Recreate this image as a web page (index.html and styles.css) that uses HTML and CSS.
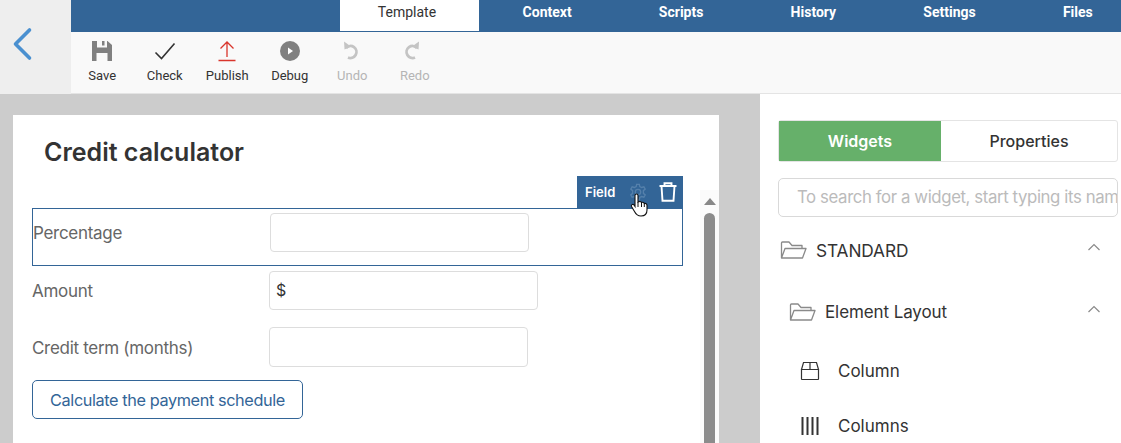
FILE: index.html
```html
<!DOCTYPE html>
<html lang="en">
<head>
<meta charset="utf-8">
<title>Credit calculator</title>
<link rel="stylesheet" href="styles.css">
</head>
<body>
<header class="header">
  <div class="back">
    <svg width="22" height="34" viewBox="0 0 22 34"><path d="M18.500 3 L4.500 17 L18.500 31" fill="none" stroke="#4a90d0" stroke-width="3.600" stroke-linecap="round" stroke-linejoin="round"/></svg>
  </div>
  <div class="header-main">
    <nav class="tabs">
      <span class="tab tab-active">Template</span>
      <span class="tab">Context</span>
      <span class="tab">Scripts</span>
      <span class="tab">History</span>
      <span class="tab">Settings</span>
      <span class="tab">Files</span>
    </nav>
    <div class="toolbar">
      <div class="tool">
        <svg class="tool-icon" width="22" height="22" viewBox="0 0 22 22"><path fill="#808080" fill-rule="evenodd" d="M1 1 H16.500 L21 5 V21 H1 Z M6 1 V7.500 H16 V1 H13.500 V5.500 H11 V1 Z M5.500 13 V21 H16.500 V13 Z"/></svg>
        <span>Save</span>
      </div>
      <div class="tool">
        <svg class="tool-icon" width="22" height="22" viewBox="0 0 22 22"><path d="M1.500 12.500 L7.500 18.500 L20.500 3.500" fill="none" stroke="#333" stroke-width="1.600"/></svg>
        <span>Check</span>
      </div>
      <div class="tool">
        <svg class="tool-icon" width="22" height="22" viewBox="0 0 22 22"><path d="M11 2 V17 M4.500 8.500 L11 2 L17.500 8.500 M2.500 20.500 H19.500" fill="none" stroke="#d9352c" stroke-width="1.300"/></svg>
        <span>Publish</span>
      </div>
      <div class="tool">
        <svg class="tool-icon" width="22" height="22" viewBox="0 0 22 22"><circle cx="11" cy="11" r="10" fill="#808080"/><path d="M9 7.500 L14 11 L9 14.500 Z" fill="#fff"/></svg>
        <span>Debug</span>
      </div>
      <div class="tool tool-off">
        <svg class="tool-icon" width="22" height="22" viewBox="0 0 22 22"><path d="M5 8 A6 6 0 1 1 7 17.500" fill="none" stroke="#c4c4c4" stroke-width="2.800"/><path d="M3 1.500 L3.500 9.500 L10 6.500 Z" fill="#c4c4c4"/></svg>
        <span>Undo</span>
      </div>
      <div class="tool tool-off">
        <svg class="tool-icon" width="22" height="22" viewBox="0 0 22 22"><path d="M13 8 A6 6 0 1 0 11 17.500" fill="none" stroke="#c4c4c4" stroke-width="2.800"/><path d="M15 1.500 L14.500 9.500 L8 6.500 Z" fill="#c4c4c4"/></svg>
        <span>Redo</span>
      </div>
    </div>
  </div>
</header>
<main class="workspace">
  <section class="canvas">
    <div class="page">
      <h1 class="title">Credit calculator</h1>
      <div class="form">
        <div class="field-selected">
          <div class="field-bar">
            <span class="field-bar-label">Field</span>
            <svg class="gear" width="18" height="18" viewBox="0 0 20 20"><path d="M8.500 1.500 H11.500 L12 4 L14 5 L16.500 4.200 L18 6.800 L16 8.500 V11.500 L18 13.200 L16.500 15.800 L14 15 L12 16 L11.500 18.500 H8.500 L8 16 L6 15 L3.500 15.800 L2 13.200 L4 11.500 V8.500 L2 6.800 L3.500 4.200 L6 5 L8 4 Z" fill="none" stroke="#5580ab" stroke-width="1.500"/><circle cx="10" cy="10" r="3" fill="none" stroke="#5580ab" stroke-width="1.500"/></svg>
            <svg class="trash" width="18" height="20" viewBox="0 0 18 20"><path d="M0.500 4 H17.500 M5.500 4 V1.200 H12.500 V4 M2.500 4 L3.500 18.800 H14.500 L15.500 4" fill="none" stroke="#fff" stroke-width="1.900"/></svg>
            <svg class="hand" width="18" height="24" viewBox="0 0 18 24"><path d="M5 2.500 C5 0.500 8 0.500 8 2.500 V9 C10 8 11 8.500 11.500 9.500 C13 9 14 9.500 14.300 10.500 C16 10 17 11 17 12.500 V17 C17 20.500 15 23 11 23 C7.500 23 6 21.500 4.500 18.500 L1.500 13.500 C0.800 12 2.800 10.500 4 12 L5 13.500 Z" fill="#fff" stroke="#111" stroke-width="1.100"/><path d="M8 9 V14 M11.500 9.500 V14 M14.300 10.500 V14" fill="none" stroke="#111" stroke-width="1"/></svg>
          </div>
          <span class="label label-selected">Percentage</span>
          <span class="input input-selected"></span>
        </div>
        <div class="row row-amount">
          <span class="label">Amount</span>
          <span class="input input-wide">$</span>
        </div>
        <div class="row row-term">
          <span class="label">Credit term (months)</span>
          <span class="input"></span>
        </div>
        <button class="calc" type="button">Calculate the payment schedule</button>
      </div>
      <div class="scroll">
        <span class="scroll-arrow"></span>
        <span class="scroll-thumb"></span>
      </div>
    </div>
  </section>
  <aside class="panel">
    <div class="switch">
      <span class="switch-item switch-on">Widgets</span>
      <span class="switch-item switch-off">Properties</span>
    </div>
    <div class="search"><span class="search-text">To search for a widget, start typing its name</span></div>
    <div class="group group-top">
      <svg width="27" height="18" viewBox="0 0 27 18"><path d="M1.500 17 V2 Q1.500 1 2.500 1 H9 L12 4.500 H22 V7.500 M1.500 17 L5 7.500 H26 L22.500 17 Z" fill="none" stroke="#8a8a8a" stroke-width="1.300" stroke-linejoin="round"/></svg>
      <span class="group-name group-name-caps">STANDARD</span>
      <svg class="chev" width="14" height="8" viewBox="0 0 14 8"><path d="M1.500 7 L7 1.500 L12.500 7" fill="none" stroke="#8a8a8a" stroke-width="1.200"/></svg>
    </div>
    <div class="group group-sub">
      <svg width="27" height="18" viewBox="0 0 27 18"><path d="M1.500 17 V2 Q1.500 1 2.500 1 H9 L12 4.500 H22 V7.500 M1.500 17 L5 7.500 H26 L22.500 17 Z" fill="none" stroke="#8a8a8a" stroke-width="1.300" stroke-linejoin="round"/></svg>
      <span class="group-name">Element Layout</span>
      <svg class="chev" width="14" height="8" viewBox="0 0 14 8"><path d="M1.500 7 L7 1.500 L12.500 7" fill="none" stroke="#8a8a8a" stroke-width="1.200"/></svg>
    </div>
    <div class="widget widget-first">
      <svg width="20" height="20" viewBox="0 0 20 20"><path d="M1.500 8.500 V18 Q1.500 18.500 2 18.500 H18 Q18.500 18.500 18.500 18 V8.500 M1.500 8.500 L3.500 1.500 H16.500 L18.500 8.500 Z M10 1.500 V8.500" fill="none" stroke="#333" stroke-width="1.200"/></svg>
      <span>Column</span>
    </div>
    <div class="widget">
      <svg width="20" height="20" viewBox="0 0 20 20"><path d="M2.500 1 V19 M7.500 1 V19 M12.500 1 V19 M17.500 1 V19" fill="none" stroke="#333" stroke-width="2"/></svg>
      <span>Columns</span>
    </div>
  </aside>
</main>
</body>
</html>
```

FILE: styles.css
```css
* { box-sizing: border-box; }
html, body { margin: 0; height: 100%; overflow: hidden; }
body { width: 1121px; height: 443px; font-family: Inter, "Liberation Sans", sans-serif; color: #333; background: #ccc; display: flex; flex-direction: column; }

.header { display: flex; height: 94px; flex: none; }
.back { width: 71px; background: #eeeeee; display: flex; align-items: flex-start; justify-content: flex-start; padding: 27px 0 0 11px; }
.header-main { flex: 1; min-width: 0; display: flex; flex-direction: column; }

.tabs { height: 32px; background: #336597; display: flex; padding-left: 269px; overflow: hidden; font-family: Roboto, sans-serif; font-size: 14px; font-weight: 700; color: #fff; }
.tab { padding: 4px 43.600px 0; flex: none; white-space: nowrap; line-height: 17px; }
.tab-active { width: 139px; padding: 4px 5px 0 0; text-align: center; background: #fff; color: #333; font-weight: 400; border-bottom: 1px solid #336597; }

.toolbar { flex: 1; background: #f9f9f9; border-bottom: 1px solid #e4e4e4; display: flex; font-family: Roboto, sans-serif; font-size: 13px; }
.tool { width: 62.500px; display: flex; flex-direction: column; align-items: center; padding-top: 8px; color: #333; }
.tool-icon { display: block; margin-bottom: 6px; }
.tool-off { color: #b5b5b5; }

.workspace { flex: 1; min-height: 0; display: flex; }
.canvas { width: 760px; padding: 21px 41px 0 13px; overflow: hidden; }
.page { position: relative; height: 400px; background: #fff; padding: 0 36px 0 19px; }
.title { margin: 0; padding: 20px 0 0 12px; height: 93px; font-size: 25px; line-height: 34px; font-weight: 600; color: #333; }

.form { display: flex; flex-direction: column; font-size: 17px; letter-spacing: -0.300px; color: #666; }
.field-selected { position: relative; height: 58px; border: 1px solid #336597; display: flex; align-items: flex-start; }
.field-bar { position: absolute; right: -1px; top: -33px; width: 106px; height: 32px; background: #336597; color: #fff; display: flex; align-items: center; padding-left: 8px; font-size: 13px; letter-spacing: 0; font-weight: 600; z-index: 1; }
.field-bar-label { width: 44px; }
.trash { margin-left: 12px; }
.hand { position: absolute; left: 53px; top: 17px; }

.label { width: 237px; line-height: 22px; }
.label-selected { margin-top: 13px; }
.input { display: block; width: 259px; height: 39px; background: #fff; border: 1px solid #ddd; border-radius: 4px; color: #333; font-size: 16px; line-height: 37px; padding-left: 6px; }
.input-selected { margin-top: 4px; }
.input-wide { width: 269px; }

.row { display: flex; align-items: center; }
.row-amount { margin-top: 5px; }
.row-term { margin-top: 17px; height: 40px; }
.row-term .input { height: 40px; }
.row-term .label { padding-top: 1px; }

.calc { margin-top: 13px; width: 271px; height: 39px; background: #fff; border: 1px solid #336597; border-radius: 5px; color: #336597; font: 400 16.300px Inter, sans-serif; letter-spacing: -0.400px; padding: 0; }

.scroll { position: absolute; left: 687px; top: 75px; width: 19px; height: 325px; padding-top: 8px; background: #fbfbfb; display: flex; flex-direction: column; align-items: center; }
.scroll-arrow { flex: none; width: 0; height: 0; border-left: 6.500px solid transparent; border-right: 6.500px solid transparent; border-bottom: 7.500px solid #888; }
.scroll-thumb { flex: none; width: 11px; height: 260px; margin-top: 7.500px; background: #8c8c8c; border-radius: 5.500px 5.500px 0 0; }

.panel { flex: 1; min-width: 0; background: #fff; padding: 26px 3px 0 18px; overflow: hidden; }
.switch { display: flex; height: 42px; border: 1px solid #e4e4e4; border-radius: 3px; font-size: 16px; }
.switch-item { display: flex; align-items: center; justify-content: center; }
.switch-on { width: 162px; background: #66b06a; color: #fff; font-weight: 600; }
.switch-off { flex: 1; color: #333; font-weight: 500; }
.search { margin-top: 16px; height: 39px; border: 1px solid #d9d9d9; border-radius: 5px; padding-left: 18px; overflow: hidden; white-space: nowrap; font-size: 16.800px; letter-spacing: -0.400px; line-height: 37px; color: #bbb; }
.search-text { display: block; }

.group { display: flex; align-items: center; color: #333; font-size: 17px; letter-spacing: -0.100px; }
.group-top { margin-top: 23px; height: 20px; padding-left: 2px; }
.group-sub { margin-top: 42px; height: 20px; padding-left: 11px; }
.group-name { margin-left: 9px; flex: 1; }
.group-name-caps { font-size: 17.300px; }
.chev { margin: 0 17px 6px 0; }

.widget { display: flex; align-items: center; gap: 18px; height: 20px; margin-top: 35px; padding-left: 22px; font-size: 17px; color: #333; }
.widget-first { margin-top: 39px; }
```
